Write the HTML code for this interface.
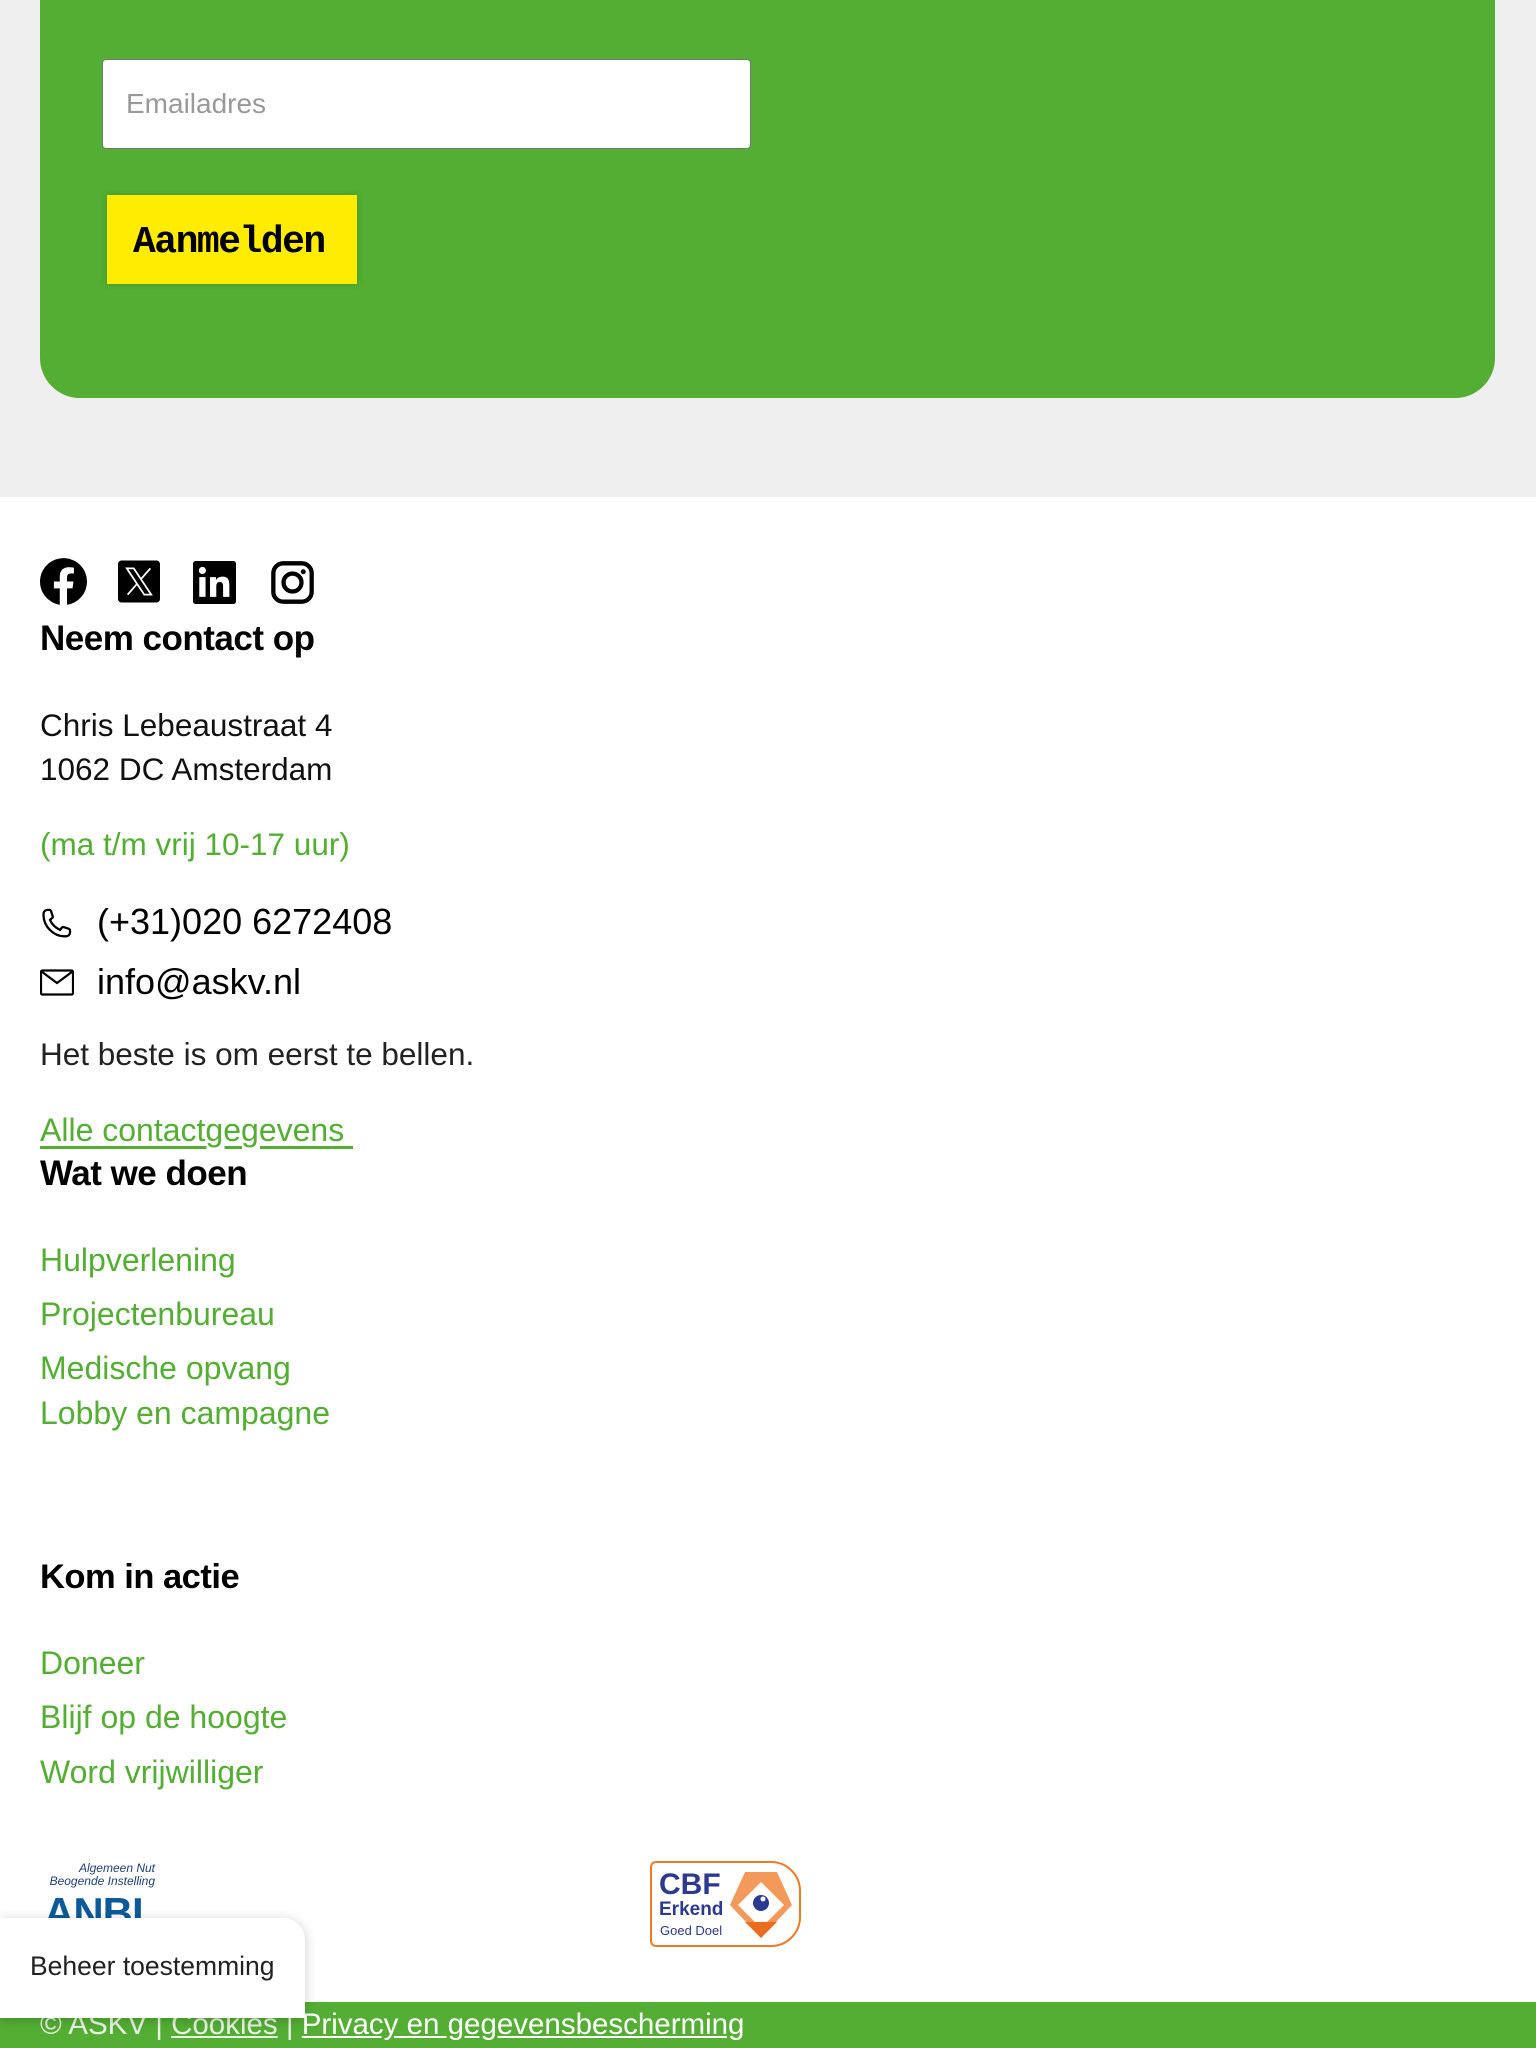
<!DOCTYPE html>
<html><head><meta charset="utf-8"><style>
*{margin:0;padding:0;box-sizing:border-box}
body{width:1536px;height:2048px;position:relative;background:#fff;font-family:"Liberation Sans",Arial,sans-serif;overflow:hidden}
.a{position:absolute;white-space:nowrap;line-height:40px}
.h{font-weight:bold;font-size:35px;color:#000;letter-spacing:-0.5px}
.t{font-size:31.5px;color:#111}
.l{font-size:32px;color:#53ae33}
.g{color:#53ae33}
</style></head><body>
<div style="position:absolute;left:0;top:0;width:1536px;height:497px;background:#efefef"></div>
<div style="position:absolute;left:40px;top:-40px;width:1455px;height:438px;background:#53ae33;border-radius:40px"></div>
<div style="position:absolute;left:102px;top:59px;width:649px;height:90px;background:#fff;border:1.5px solid #777;border-radius:4px"></div>
<div class="a" style="left:126px;top:84px;font-size:28px;color:#999">Emailadres</div>
<div style="position:absolute;left:107px;top:195px;width:250px;height:89px;background:#ffec00;box-shadow:0 0 6px rgba(0,0,0,.15)"></div>
<div class="a" style="left:133px;top:223px;font-family:'Liberation Mono',monospace;font-weight:bold;font-size:38px;color:#000;letter-spacing:-1.5px">Aanmelden</div>

<svg style="position:absolute;left:40px;top:558px" width="47" height="47" viewBox="0 0 24 24"><path fill="#000" d="M24 12a12 12 0 1 0-13.9 11.9v-8.4H7.1V12h3V9.4c0-3 1.8-4.7 4.5-4.7 1.3 0 2.7.2 2.7.2v3h-1.5c-1.5 0-2 .9-2 1.9V12h3.3l-.5 3.5h-2.8v8.4A12 12 0 0 0 24 12z"/></svg>
<svg style="position:absolute;left:118px;top:560px" width="42" height="43" viewBox="0 0 24 24"><rect width="24" height="24" rx="2" fill="#000"/><path fill="none" stroke="#fff" stroke-width="1" d="M5 4.5h4l10 15h-4zM18.5 4.5l-5.6 6.4M5.5 19.5l5.6-6.4"/></svg>
<svg style="position:absolute;left:193px;top:561px" width="43" height="43" viewBox="0 0 24 24"><rect width="24" height="24" rx="1.5" fill="#000"/><rect x="3.5" y="9" width="3.5" height="11" fill="#fff"/><circle cx="5.25" cy="5.3" r="2" fill="#fff"/><path fill="#fff" d="M9.5 9h3.3v1.6c.6-1 1.8-1.9 3.6-1.9 3.3 0 3.9 2.1 3.9 5V20h-3.5v-5.4c0-1.3 0-2.9-1.8-2.9s-2 1.4-2 2.8V20H9.5z"/></svg>
<svg style="position:absolute;left:271px;top:561px" width="43" height="43" viewBox="0 0 24 24"><rect x="1.3" y="1.3" width="21.4" height="21.4" rx="5.5" fill="none" stroke="#000" stroke-width="2.4"/><circle cx="12" cy="12" r="5" fill="none" stroke="#000" stroke-width="2.4"/><circle cx="18" cy="6" r="1.4" fill="#000"/></svg>

<div class="a h" style="left:40px;top:619px">Neem contact op</div>
<div class="a t" style="left:40px;top:705px">Chris Lebeaustraat 4</div>
<div class="a t" style="left:40px;top:749px">1062 DC Amsterdam</div>
<div class="a t g" style="left:40px;top:824px">(ma t/m vrij 10-17 uur)</div>
<svg style="position:absolute;left:40px;top:906px" width="34" height="34" viewBox="0 0 24 24"><path fill="none" stroke="#000" stroke-width="1.6" stroke-linejoin="round" d="M2.5 5.5c0-1.5 1.2-2.8 2.8-2.8h1.3c.6 0 1 .4 1.2.9l1.2 3.7c.1.5-.1 1-.5 1.3L7 9.7c1.4 3.1 4 5.8 7.2 7.2l1.1-1.5c.3-.4.9-.6 1.4-.5l3.6 1.2c.5.2.9.7.9 1.2v1.3c0 1.5-1.3 2.8-2.8 2.8h-1C9.5 21.4 2.5 14.3 2.5 6.5z"/></svg>
<div class="a" style="left:97px;top:902px;font-size:36px;color:#000">(+31)020 6272408</div>
<svg style="position:absolute;left:40px;top:969px" width="34" height="27" viewBox="0 0 34 27"><rect x="1" y="1.5" width="32" height="24" rx="1.5" fill="none" stroke="#000" stroke-width="2.2"/><path d="M1.5 2.5 17 14 32.5 2.5" fill="none" stroke="#000" stroke-width="2.2"/></svg>
<div class="a" style="left:97px;top:962px;font-size:36px;color:#000">info@askv.nl</div>
<div class="a t" style="left:40px;top:1034px;color:#222">Het beste is om eerst te bellen.</div>
<div class="a l" style="left:40px;top:1110px;text-decoration:underline;text-underline-offset:5px">Alle contactgegevens&nbsp;</div>
<div class="a h" style="left:40px;top:1154px">Wat we doen</div>
<div class="a l" style="left:40px;top:1240px">Hulpverlening</div>
<div class="a l" style="left:40px;top:1294px">Projectenbureau</div>
<div class="a l" style="left:40px;top:1348px">Medische opvang</div>
<div class="a l" style="left:40px;top:1393px">Lobby en campagne</div>
<div class="a h" style="left:40px;top:1557px;font-size:34.5px">Kom in actie</div>
<div class="a l" style="left:40px;top:1643px">Doneer</div>
<div class="a l" style="left:40px;top:1697px">Blijf op de hoogte</div>
<div class="a l" style="left:40px;top:1752px">Word vrijwilliger</div>

<div style="position:absolute;left:45px;top:1862px;width:110px;text-align:right;font-style:italic;font-family:'Liberation Sans Narrow','Liberation Sans',sans-serif;font-size:12px;line-height:13px;color:#1d3f7a">Algemeen Nut<br>Beogende Instelling</div>
<div class="a" style="left:44px;top:1888px;font-size:42px;font-weight:bold;color:#0d5a9a;line-height:50px;letter-spacing:-1px">ANBI</div>

<div style="position:absolute;left:650px;top:1861px;width:151px;height:86px;border:2px solid #ef7a26;border-radius:6px 30px 30px 6px;background:#fff"></div>
<div class="a" style="left:659px;top:1868px;font-size:30px;font-weight:bold;color:#2b3990;line-height:34px">CBF</div>
<div class="a" style="left:659px;top:1899px;font-size:19px;font-weight:bold;color:#2b3990;line-height:22px">Erkend</div>
<div class="a" style="left:660px;top:1923px;font-size:13px;color:#2b3990;line-height:16px">Goed Doel</div>
<svg style="position:absolute;left:730px;top:1872px" width="62" height="66" viewBox="0 0 62 66"><path d="M15 0h32l15 33-31 33L0 33z" fill="#f39a5a"/><path d="M8 33 31 10l23 23-23 23z" fill="#fff"/><path d="M15 50h32L31 66z" fill="#ec6c1f"/><circle cx="31" cy="31" r="8" fill="#2b3990"/><circle cx="33" cy="27" r="2.5" fill="#fff"/></svg>

<div style="position:absolute;left:0;top:2002px;width:1536px;height:46px;background:#53ae33"></div>
<div class="a" style="left:40px;top:2005px;font-size:29.5px;color:#e8f3e3">© ASKV | <u>Cookies</u> | <u style="color:#fff">Privacy en gegevensbescherming</u></div>

<div style="position:absolute;left:0;top:1918px;width:305px;height:100px;background:#fff;border-radius:0 22px 0 0;box-shadow:0 2px 12px rgba(0,0,0,.2)"></div>
<div class="a" style="left:30px;top:1946px;font-size:26.5px;color:#222">Beheer toestemming</div>
</body></html>
